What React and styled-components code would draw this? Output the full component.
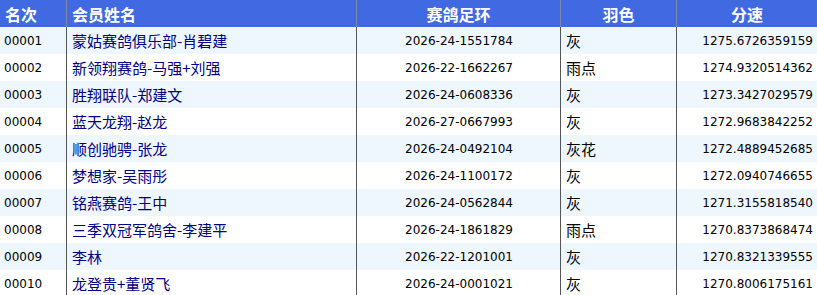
import React from 'react';
import styled, { createGlobalStyle } from 'styled-components';

const rows = [
  ['00001', '蒙姑赛鸽俱乐部-肖碧建', '2026-24-1551784', '灰', '1275.6726359159'],
  ['00002', '新领翔赛鸽-马强+刘强', '2026-22-1662267', '雨点', '1274.9320514362'],
  ['00003', '胜翔联队-郑建文', '2026-24-0608336', '灰', '1273.3427029579'],
  ['00004', '蓝天龙翔-赵龙', '2026-27-0667993', '灰', '1272.9683842252'],
  ['00005', '顺创驰骋-张龙', '2026-24-0492104', '灰花', '1272.4889452685'],
  ['00006', '梦想家-吴雨彤', '2026-24-1100172', '灰', '1272.0940746655'],
  ['00007', '铭燕赛鸽-王中', '2026-24-0562844', '灰', '1271.3155818540'],
  ['00008', '三季双冠军鸽舍-李建平', '2026-24-1861829', '雨点', '1270.8373868474'],
  ['00009', '李林', '2026-22-1201001', '灰', '1270.8321339555'],
  ['00010', '龙登贵+董贤飞', '2026-24-0001021', '灰', '1270.8006175161'],
];

const GlobalStyle = createGlobalStyle`
  body {
    margin: 0;
    background: #fff;
    overflow: hidden;
  }
`;

const Table = styled.div`
  width: 817px;
  display: flex;
  flex-direction: column;
`;

const Row = styled.div`
  display: grid;
  grid-template-columns: 66px 290px 204px 116px 141px;
  height: 27px;
  background: ${(p) => (p.$head ? '#4169e1' : p.$odd ? '#eef6fe' : '#ffffff')};
`;

const HeadCell = styled.div`
  display: flex;
  align-items: center;
  justify-content: ${(p) => (p.$center ? 'center' : 'flex-start')};
  padding: 0 5px;
  border-left: ${(p) => (p.$first ? 'none' : '1px solid #8088a8')};
  color: #fff;
  font-family: "Noto Sans CJK SC", sans-serif;
  font-weight: bold;
  font-size: 16px;
  overflow: hidden;
  white-space: nowrap;
`;

const Cell = styled.div`
  display: flex;
  align-items: center;
  justify-content: ${(p) => p.$align || 'flex-start'};
  padding: ${(p) => (p.$first ? '0 0 0 4px' : '0 4px 0 5px')};
  border-left: ${(p) => (p.$first ? 'none' : '1px solid #555')};
  color: ${(p) => (p.$name ? '#000080' : '#000')};
  font-family: ${(p) =>
    p.$cjk
      ? '"Noto Sans CJK SC", sans-serif'
      : '"DejaVu Sans", "Noto Sans CJK SC", sans-serif'};
  font-size: ${(p) => (p.$cjk ? '15px' : '12px')};
  overflow: hidden;
  white-space: nowrap;
`;

export default function App() {
  return (
    <>
      <GlobalStyle />
      <Table>
        <Row $head>
          <HeadCell $first>名次</HeadCell>
          <HeadCell>会员姓名</HeadCell>
          <HeadCell $center>赛鸽足环</HeadCell>
          <HeadCell $center>羽色</HeadCell>
          <HeadCell $center>分速</HeadCell>
        </Row>
        {rows.map((r, i) => (
          <Row key={r[0]} $odd={i % 2 === 0}>
            <Cell $first>{r[0]}</Cell>
            <Cell $name $cjk>{r[1]}</Cell>
            <Cell $align="center">{r[2]}</Cell>
            <Cell $cjk>{r[3]}</Cell>
            <Cell $align="flex-end">{r[4]}</Cell>
          </Row>
        ))}
      </Table>
    </>
  );
}
